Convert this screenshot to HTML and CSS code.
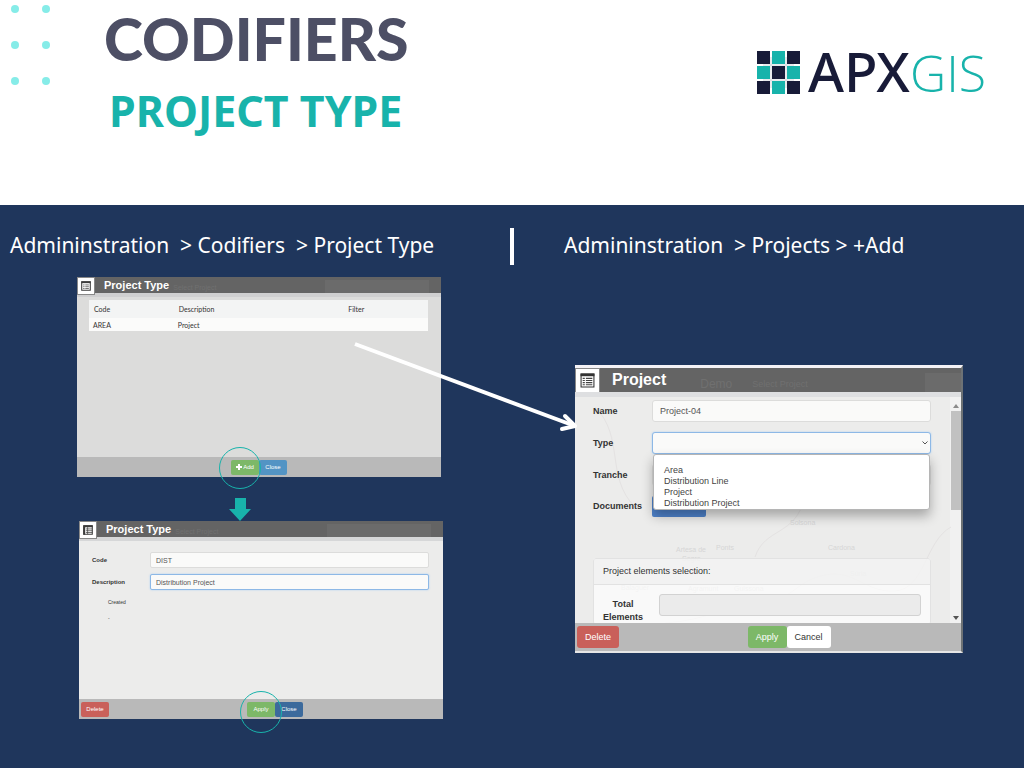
FILE: index.html
```html
<!DOCTYPE html>
<html lang="en">
<head>
<meta charset="utf-8">
<title>Codifiers - Project Type</title>
<link rel="stylesheet" href="styles.css">
</head>
<body>
<header class="masthead">
  <svg class="dots" width="52" height="88" viewBox="0 0 52 88" aria-hidden="true">
    <g fill="#86ece8"><circle cx="15" cy="9" r="4"/><circle cx="46" cy="9" r="4"/><circle cx="15" cy="45" r="4"/><circle cx="46" cy="45" r="4"/><circle cx="15" cy="81" r="4"/><circle cx="46" cy="81" r="4"/></g>
  </svg>
  <div class="titles">
    <h1 class="title">CODIFIERS</h1>
    <h2 class="subtitle">PROJECT TYPE</h2>
  </div>
  <div class="logo">
    <svg width="43" height="43" viewBox="0 0 43 43" aria-hidden="true">
      <path d="M6 14h31M6 29h31M14 6v31M29 6v31" stroke="#d4d6db" stroke-width="1"/>
      <g fill="#181b38"><path d="M0 0h13v13H0zM30 0h13v13H30zM15 15h13v13H15zM0 30h13v13H0zM30 30h13v13H30z"/></g>
      <g fill="#18b3ab"><path d="M15 0h13v13H15zM0 15h13v13H0zM30 15h13v13H30zM15 30h13v13H15z"/></g>
    </svg>
    <span class="logo-text"><span class="apx">APX</span><span class="gis">GIS</span></span>
  </div>
</header>

<main class="stage">
  <section class="col">
    <p class="crumbs">Admininstration  &gt; Codifiers  &gt; Project Type</p>

    <section class="window small first">
      <div class="bar">
        <span class="bar-icon"><svg viewBox="0 0 14 14" aria-hidden="true"><path d="M1 1h12v12H1z" fill="#fff" stroke="#3c3c3c" stroke-width="1.500"/><path d="M.5.5h13V3H.5z" fill="#3c3c3c"/><path d="M3 5.500h2M3 8h2M3 10.500h2M6 5.500h5M6 8h5M6 10.500h5" stroke="#3c3c3c"/></svg></span>
        <h3 class="bar-title">Project Type</h3>
        <span class="ghost">Select Project</span>
        <span class="ghost-search"></span>
      </div>
      <div class="body list-body">
        <table class="grid">
          <thead><tr><th class="narrow">Code</th><th class="wide">Description</th><th class="narrow">Filter</th></tr></thead>
          <tbody><tr><td>AREA</td><td>Project</td><td></td></tr></tbody>
        </table>
      </div>
      <div class="foot">
        <div class="actions">
          <button class="btn green ringed" type="button"><svg class="plus" viewBox="0 0 6 6" aria-hidden="true"><path d="M3 0v6M0 3h6" stroke="#fff" stroke-width="2"/></svg>Add<span class="ring"></span></button><button class="btn sky" type="button">Close</button>
        </div>
      </div>
    </section>

    <svg class="down" width="22" height="23" viewBox="0 0 22 23" aria-hidden="true"><path d="M6 0h11v11h5L11 23 0 11h6z" fill="#18b3ab"/></svg>

    <section class="window small second">
      <div class="bar">
        <span class="bar-icon"><svg viewBox="0 0 14 14" aria-hidden="true"><path d="M1 1h12v12H1z" fill="#fff" stroke="#3c3c3c" stroke-width="1.500"/><path d="M.5.5h13V3H.5zM.5.5h2.500v13H.5z" fill="#3c3c3c"/><path d="M4 5.500h9M4 8h9M4 10.500h9M6.500 3v10" stroke="#3c3c3c"/></svg></span>
        <h3 class="bar-title">Project Type</h3>
        <span class="ghost">Select Project</span>
        <span class="ghost-search"></span>
      </div>
      <form class="body type-form">
        <label class="lbl" for="code">Code</label>
        <input class="field" id="code" type="text" value="DIST">
        <label class="lbl" for="desc">Description</label>
        <input class="field focus" id="desc" type="text" value="Distribution Project">
        <p class="created">Created</p>
        <p class="created">-</p>
      </form>
      <div class="foot">
        <button class="btn red" type="button">Delete</button>
        <div class="actions">
          <button class="btn green ringed" type="button">Apply<span class="ring low"></span></button><button class="btn navy" type="button">Close</button>
        </div>
      </div>
    </section>
  </section>

  <div class="divider"></div>

  <section class="col">
    <p class="crumbs right">Admininstration  &gt; Projects &gt; +Add</p>

    <section class="window large">
      <div class="bar">
        <span class="bar-icon"><svg viewBox="0 0 14 14" aria-hidden="true"><path d="M1 1h12v12H1z" fill="#fff" stroke="#333"/><path d="M.5.5h13v2.500H.5z" fill="#333"/><path d="M2.500 5h2M2.500 7h2M2.500 9h2M2.500 11h2M5.500 5h6M5.500 7h6M5.500 9h6M5.500 11h6" stroke="#444"/></svg></span>
        <h3 class="bar-title">Project</h3>
        <span class="ghost demo">Demo</span>
        <span class="ghost">Select Project</span>
        <span class="ghost-search"></span>
      </div>
      <div class="body project-body">
        <svg class="map" width="376" height="226" viewBox="0 0 376 226" aria-hidden="true">
          <path d="M90 226c40-2 70-20 100-22s30-20 60-26 40 18 70 16 30-50 56-64M390 60c-20 40-10 60-6 90M20 10c30 30 10 70 40 100M180 160c10-30 40-20 50-60" fill="none" stroke="#e4e2e2"/>
          <g class="places">
            <text x="101" y="155">Artesa de</text><text x="107" y="164">Segre</text><text x="141" y="153">Ponts</text><text x="215" y="128">Solsona</text><text x="253" y="153">Cardona</text><text x="275" y="179">Súria</text><text x="46" y="193">Balaguer</text><text x="113" y="194">Agramunt</text><text x="159" y="194">Guissona</text><text x="288" y="212">Manresa</text>
          </g>
        </svg>
        <form class="project-form">
          <label class="lbl" for="name">Name</label>
          <input class="field" id="name" type="text" value="Project-04">
          <label class="lbl" for="type">Type</label>
          <div class="picker">
            <select class="field focus" id="type"><option></option></select>
            <svg class="chev" width="6" height="4" viewBox="0 0 6 4" aria-hidden="true"><path d="M.5.5 3 3 5.500.5" fill="none" stroke="#555"/></svg>
            <ul class="options"><li>Area</li><li>Distribution Line</li><li>Project</li><li>Distribution Project</li></ul>
          </div>
          <label class="lbl" for="tranche">Tranche</label>
          <select class="field" id="tranche"><option></option></select>
          <span class="lbl">Documents</span>
          <button class="upload" type="button" aria-label="Documents"></button>
          <fieldset class="group">
            <div class="group-head">Project elements selection:</div>
            <div class="group-body">
              <label class="lbl total" for="total">Total Elements</label>
              <input class="field muted" id="total" type="text" readonly>
            </div>
          </fieldset>
        </form>
        <div class="scroll">
          <svg width="6" height="4" viewBox="0 0 6 4" aria-hidden="true"><path d="M0 4 3 0l3 4z" fill="#8a8a8a"/></svg>
          <div class="thumb"></div>
          <svg width="6" height="4" viewBox="0 0 6 4" aria-hidden="true"><path d="M0 0 3 4l3-4z" fill="#555"/></svg>
        </div>
      </div>
      <div class="foot">
        <button class="btn red" type="button">Delete</button>
        <div class="actions">
          <button class="btn green" type="button">Apply</button><button class="btn white" type="button">Cancel</button>
        </div>
      </div>
    </section>
  </section>

  <svg class="pointer" width="226" height="92" viewBox="0 0 226 92" aria-hidden="true">
    <path d="M1 3 221 85" stroke="#fff" stroke-width="4" fill="none"/>
    <path d="M211 75 221 85 208 88" stroke="#fff" stroke-width="4" fill="none" stroke-linecap="round" stroke-linejoin="round"/>
  </svg>
</main>
</body>
</html>
```
FILE: styles.css
```css
* { box-sizing: border-box; }
body {
  margin: 0;
  min-height: 100vh;
  display: flex;
  flex-direction: column;
  background: #fff;
  font-family: "Liberation Sans", Arial, sans-serif;
}
h1, h2, h3, p, ul { margin: 0; padding: 0; }

.masthead {
  display: flex;
  align-items: flex-start;
  min-height: 205px;
  padding-right: 38px;
}
.titles { padding: 9px 0 0 52px; }
.title {
  font: 900 59px/60px Lato, sans-serif;
  color: #4d4f65;
}
.subtitle {
  padding: 17px 0 0 5px;
  font: 700 43px/50px "Noto Sans", sans-serif;
  color: #18b3ab;
}
.logo {
  display: flex;
  align-items: center;
  gap: 8px;
  margin: 39px 0 0 auto;
}
.logo-text {
  display: flex;
  align-items: baseline;
  font: 600 55px/64px "Noto Sans", sans-serif;
}
.apx { color: #181b38; font-weight: 500; }
.gis { color: #18b3ab; font-family: "Open Sans", sans-serif; font-weight: 300; font-size: 50px; }

.stage {
  position: relative;
  flex: 1;
  display: grid;
  grid-template-columns: 1fr 4px 1fr;
  padding: 23px 0 48px;
  background: #1f365c;
}
.divider { height: 37px; background: #fff; }
.crumbs {
  padding-left: 10px;
  font: 400 21px/34px "Noto Sans", sans-serif;
  color: #fff;
  white-space: pre;
}
.crumbs.right { padding-left: 50px; }

.window { color: #333; background: #ececeb; }
.window.first { width: 364px; margin: 15px 0 0 77px; background: #dcdcdb; }
.window.second { width: 364px; margin-left: 79px; }
.window.large {
  width: 388px;
  margin: 103px 0 0 61px;
  border-top: 3px solid #f4f2f6;
  border-bottom: 2px solid #e6e6e6;
  border-right: 2px solid #6d7275;
}
.down { display: block; margin: 21px 0 0 229px; }

.bar {
  display: flex;
  align-items: flex-start;
  height: 16px;
  background: #646464;
}
.bar-icon {
  display: flex;
  position: relative;
  padding: 3px;
  background: #fff;
  border: 1px solid #888;
}
.bar-icon svg { width: 10px; height: 10px; }
.bar-title {
  margin-left: 9px;
  font-size: 11px;
  line-height: 16px;
  color: #fff;
}
.ghost { margin-left: 4px; font-size: 7px; line-height: 22px; color: #707070; }
.ghost-search { width: 104px; height: 13px; margin: 3px 12px 0 auto; background: #6b6b6b; }
.large .bar { height: 24px; }
.large .bar-icon { padding: 4px; }
.large .bar-icon svg { width: 15px; height: 15px; }
.large .bar-title { margin-left: 12px; font-size: 16px; line-height: 24px; }
.large .ghost { margin-left: 20px; font-size: 9px; line-height: 32px; }
.large .ghost.demo { margin-left: 34px; font-size: 12px; }
.large .ghost-search { width: 36px; height: 19px; margin: 5px 0 0 auto; }

.body { border-top: 4px solid #d6d7d8; }
.list-body { min-height: 164px; padding: 3px 13px 0 12px; }
.first .body { border-top-color: #cfcfd0; }
.grid {
  width: 100%;
  border-collapse: collapse;
  table-layout: fixed;
  font: 400 7px/12px Lato, sans-serif;
  text-align: left;
  background: #fbfbfa;
}
.grid th { padding: 3px 5px; font-weight: 400; background: #f3f4f4; }
.grid td { padding: 0 4px; height: 13px; }
.narrow { width: 25%; }
.wide { width: 50%; }

.type-form {
  display: grid;
  grid-template-columns: 58px 1fr;
  gap: 6px 0;
  align-content: start;
  align-items: center;
  min-height: 162px;
  padding: 11px 14px 0 13px;
}
.lbl { font-size: 6px; font-weight: 700; line-height: 12px; }
.field {
  width: 100%;
  min-width: 0;
  height: 16px;
  padding: 0 5px;
  font: 400 7px "Liberation Sans", Arial, sans-serif;
  color: #555;
  background: #fafaf9;
  border: 1px solid #dcdcdb;
  border-radius: 2px;
  appearance: none;
}
.field.focus { border-color: #8db8e6; box-shadow: 0 0 2px #a8cdf2; }
.created { grid-column: 1 / -1; padding: 3px 0 0 16px; font-size: 5px; line-height: 7px; }

.foot {
  display: flex;
  align-items: center;
  height: 20px;
  padding: 0 2px;
  background: #b9b9b9;
}
.actions { flex: 1; display: flex; justify-content: center; }
.btn {
  display: flex;
  align-items: center;
  justify-content: center;
  gap: 1px;
  min-width: 28px;
  height: 15px;
  padding: 0 5px;
  border: 0;
  border-radius: 2px;
  font: 400 6px "Liberation Sans", Arial, sans-serif;
  color: #fff;
}
.green { background: #7db868; }
.sky { background: #5394c4; }
.navy { background: #3c6a9c; }
.red { background: #c9605a; }
.white { background: #fff; color: #333; }
.plus { width: 6px; height: 6px; }
.ringed { position: relative; }
.ring {
  position: absolute;
  left: -12px;
  top: -13px;
  width: 42px;
  height: 42px;
  border: 1px solid #18b3ab;
  border-radius: 50%;
  z-index: 1;
}
.ring.low { left: -7px; top: -11px; }

.project-body {
  position: relative;
  display: flex;
  height: 231px;
  overflow: hidden;
  border-top: 5px solid #dedfe1;
}
.map { position: absolute; left: 0; top: 0; }
.places { font-size: 7px; fill: #d6d6d6; }
.project-form {
  position: relative;
  flex: 1;
  display: grid;
  grid-template-columns: 59px 1fr;
  grid-auto-rows: max-content;
  gap: 10px 0;
  align-items: center;
  padding: 3px 19px 0 18px;
}
.large .lbl { font-size: 9px; line-height: 13px; }
.large .field { height: 22px; padding: 0 7px; font-size: 9px; border-radius: 3px; }
.picker { position: relative; display: flex; }
.chev { position: absolute; right: 3px; top: 9px; }
.options {
  position: absolute;
  left: 1px;
  right: 1px;
  top: 22px;
  z-index: 2;
  padding: 10px 10px 0;
  list-style: none;
  font-size: 9px;
  line-height: 11px;
  color: #444;
  background: #fff;
  border: 1px solid #b5b5b5;
  border-radius: 3px;
  box-shadow: 0 6px 12px rgba(0, 0, 0, 0.3);
}
.upload { width: 54px; height: 21px; border: 0; border-radius: 2px; background: #4f83cc; }
.group {
  grid-column: 1 / -1;
  min-width: 0;
  margin: 31px 0 0;
  padding: 0;
  border: 1px solid #e2e2e2;
  border-radius: 3px;
  background: rgba(255, 255, 255, 0.7);
}
.group-head {
  padding: 0 9px;
  font-size: 9px;
  line-height: 25px;
  background: rgba(236, 236, 236, 0.6);
  border-bottom: 1px solid #e2e2e2;
}
.group-body {
  display: grid;
  grid-template-columns: 56px 1fr;
  align-items: start;
  padding: 9px 9px 0;
}
.total { width: 40px; padding-top: 4px; text-align: center; }
.large .muted { background: #ebebeb; border-color: #d2d2d2; }
.scroll {
  display: flex;
  flex-direction: column;
  align-items: center;
  width: 11px;
  padding: 7px 0 3px;
  background: #f1f1f1;
}
.thumb { width: 10px; height: 99px; margin: 3px 0 auto; background: #c1c1c1; }
.large .foot { height: 28px; }
.large .btn { min-width: 39px; height: 22px; padding: 0 8px; font-size: 9px; border-radius: 3px; }

.pointer { position: absolute; left: 354px; top: 136px; }
```
